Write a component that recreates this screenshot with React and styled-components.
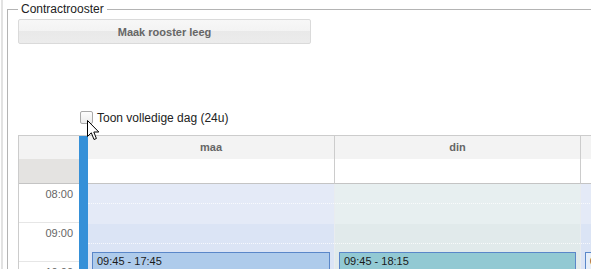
import React from "react";
import styled, { createGlobalStyle } from "styled-components";

const Global = createGlobalStyle`
  html, body { margin: 0; padding: 0; background: #fff; overflow: hidden; }
  body { font-family: "Liberation Sans", Arial, sans-serif; }
`;

const Page = styled.div`
  margin-left: 1px;
  border-left: 2px solid #e2e2e2;
  height: 269px;
  padding-top: 2px;
  box-sizing: border-box;
  overflow: hidden;
`;

const Fieldset = styled.fieldset`
  margin: 0 0 0 4px;
  padding: 3px 0 0 10px;
  border: 1px solid #b4b4b4;
  border-radius: 0;
  width: 700px;
  min-width: 0;
  box-sizing: border-box;
  height: 400px;
`;

const Legend = styled.legend`
  padding: 0 3px;
  font-size: 12px;
  line-height: 14px;
  color: #222;
`;

const Button = styled.button`
  display: block;
  width: 293px;
  height: 25px;
  margin: 0;
  padding: 0;
  border: 1px solid #dadada;
  border-radius: 2px;
  background: linear-gradient(to bottom, #f7f7f7 0%, #f3f3f3 50%, #e9e9e9 50%, #ececec 100%);
  font-family: "Liberation Sans", Arial, sans-serif;
  font-size: 11px;
  font-weight: bold;
  color: #666;
`;

const ToggleRow = styled.label`
  position: relative;
  display: flex;
  align-items: center;
  gap: 4px;
  margin: 67px 0 0 62px;
  height: 13px;
  font-size: 12px;
  color: #222;
`;

const Check = styled.span`
  width: 13px;
  height: 13px;
  box-sizing: border-box;
  border: 1px solid #a9a9a9;
  border-radius: 2px;
  background: linear-gradient(to bottom, #fdfdfd, #ececec);
`;

const Cursor = styled.svg`
  position: absolute;
  left: 7px;
  top: 9px;
  z-index: 5;
`;

const Calendar = styled.div`
  display: flex;
  margin-top: 11px;
  border-top: 1px solid #cccccc;
  border-left: 1px solid #cccccc;
  height: 300px;
`;

const Column = styled.div`
  display: flex;
  flex-direction: column;
  width: ${(p) => p.$w}px;
  flex: none;
`;

const HeadCell = styled.div`
  height: 23px;
  background: #f3f3f3;
  border-right: ${(p) => (p.$sep ? "1px solid #cccccc" : "none")};
  font-size: 11px;
  font-weight: bold;
  color: #666;
  text-align: center;
  line-height: 22px;
`;

const AllDayCell = styled.div`
  height: 24px;
  background: ${(p) => (p.$gutter ? "#e4e3e1" : "#fff")};
  border-right: ${(p) => (p.$sep ? "1px solid #cccccc" : "none")};
  border-bottom: 1px solid #c4c4c4;
`;

const TimeCell = styled.div`
  border-bottom: 1px solid #e6e6e6;
  font-size: 11px;
  color: #666;
  text-align: right;
  padding: 4px 6px 0 0;
  box-sizing: content-box;
  height: 34px;
`;

const Splitter = styled.div`
  width: 9px;
  flex: none;
  background: #3590d8;
`;

const DayBody = styled.div`
  position: relative;
  flex: 1;
  border-right: 1px solid #e9ecef;
`;

const HalfHour = styled.div`
  height: 19px;
  background: ${(p) => p.$bg};
  border-bottom: 1px dotted ${(p) => (p.$dotted ? "rgba(255,255,255,0.75)" : "transparent")};
`;

const Event = styled.div`
  position: absolute;
  left: 4px;
  right: 4px;
  border: 1px solid #5a87c9;
  background: ${(p) => p.$bg};
  font-size: 11px;
  line-height: 13px;
  color: #1a1a1a;
  padding: 2px 4px;
  box-sizing: border-box;
  white-space: nowrap;
  overflow: hidden;
`;

const HOUR = 39;
const START = 8;

const days = [
  { name: "maa", w: 247, light: "#e4eaf7", dark: "#dbe4f5", ev: "#aecbeb", from: 9.75, to: 17.75, label: "09:45 - 17:45" },
  { name: "din", w: 246, light: "#e7eff0", dark: "#e1eaeb", ev: "#92c9d3", from: 9.75, to: 18.25, label: "09:45 - 18:15" },
  { name: "woe", w: 246, light: "#e4eaf7", dark: "#dbe4f5", ev: "#e6eef9", from: 9.75, to: 17.75, label: "09:45 - 17:45" },
];

const hours = ["08:00", "09:00", "10:00", "11:00"];

export default function App() {
  return (
    <>
      <Global />
      <Page>
        <Fieldset>
          <Legend>Contractrooster</Legend>
          <Button type="button">Maak rooster leeg</Button>
          <ToggleRow>
            <Check />
            <span>Toon volledige dag (24u)</span>
            <Cursor width="13" height="21" viewBox="0 0 13 21">
              <path
                d="M0.5 0.5 L0.5 16.5 L4.3 12.8 L7 19.5 L9.4 18.5 L6.8 12 L11.8 12 Z"
                fill="#fff"
                stroke="#000"
                strokeWidth="1"
                strokeLinejoin="miter"
              />
            </Cursor>
          </ToggleRow>
          <Calendar>
            <Column $w={60}>
              <HeadCell />
              <AllDayCell $gutter />
              {hours.map((h) => (
                <TimeCell key={h}>{h}</TimeCell>
              ))}
            </Column>
            <Splitter />
            {days.map((d) => (
              <Column key={d.name} $w={d.w}>
                <HeadCell $sep>{d.name}</HeadCell>
                <AllDayCell $sep />
                <DayBody>
                  {hours.map((h, i) => (
                    <React.Fragment key={h}>
                      <HalfHour $bg={i === 0 ? d.light : d.dark} $dotted />
                      <HalfHour $bg={i === 0 ? d.light : d.dark} />
                    </React.Fragment>
                  ))}
                  <Event
                    $bg={d.ev}
                    style={{ top: (d.from - START) * HOUR, height: (d.to - d.from) * HOUR }}
                  >
                    {d.label}
                  </Event>
                </DayBody>
              </Column>
            ))}
          </Calendar>
        </Fieldset>
      </Page>
    </>
  );
}
